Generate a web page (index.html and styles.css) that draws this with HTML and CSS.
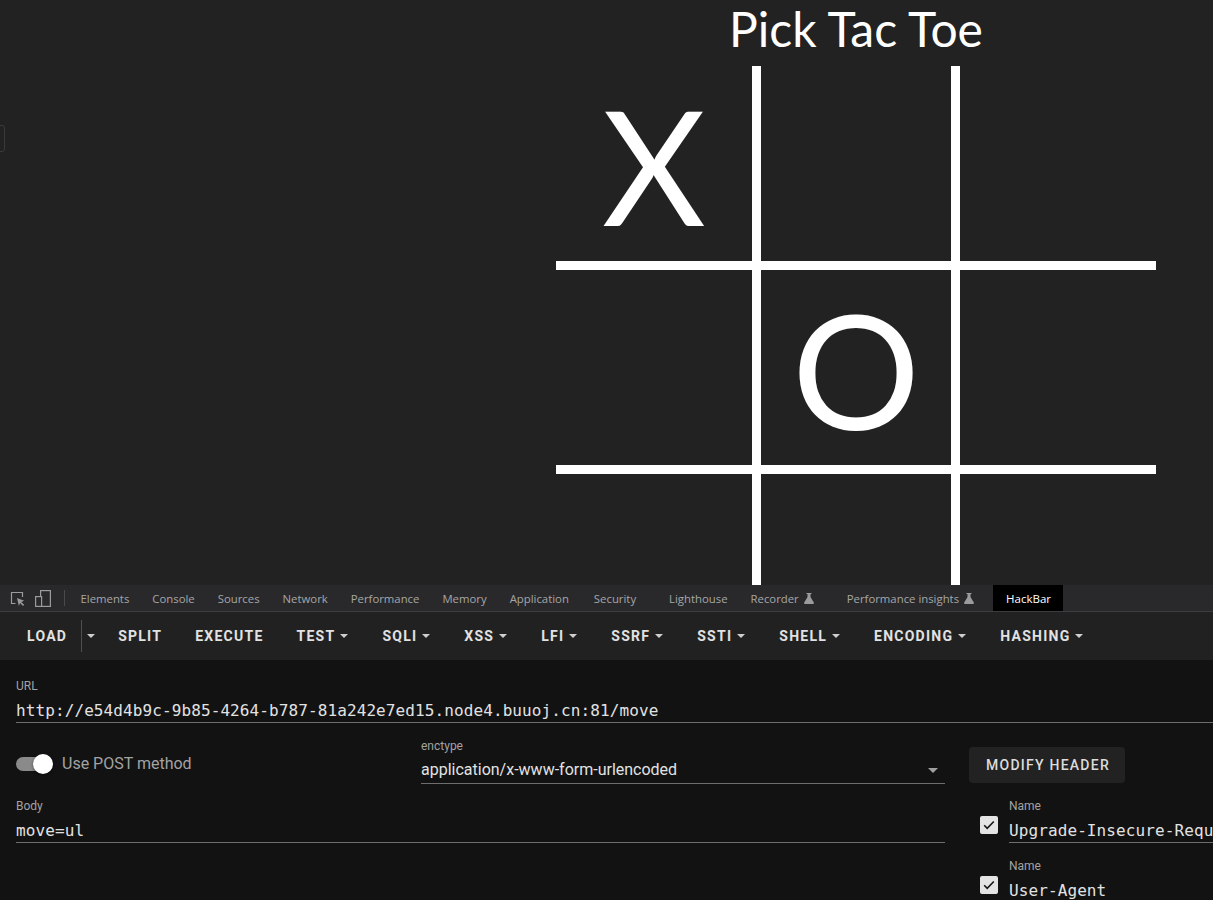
FILE: index.html
```html
<!DOCTYPE html>
<html lang="en">
<head>
<meta charset="utf-8">
<title>Pick Tac Toe</title>
<link rel="stylesheet" href="styles.css">
</head>
<body>
<div class="site">
  <div class="ghost-box"></div>
  <div class="game">
    <h1 class="title">Pick Tac Toe</h1>
    <div class="board">
      <div class="cell">X</div>
      <div class="cell"></div>
      <div class="cell"></div>
      <div class="cell"></div>
      <div class="cell">O</div>
      <div class="cell"></div>
      <div class="cell"></div>
      <div class="cell"></div>
      <div class="cell"></div>
    </div>
  </div>
</div>

<div class="devtools">
  <div class="devtabs">
    <span class="dt-icon">
      <svg width="15" height="15" viewBox="0 0 15 15"><path d="M5.5 12.5H1.5V1.5h11v4.5" fill="none" stroke="#9b9b9b" stroke-width="1.2"/><path d="M7 7l7.2 2.7-3 1.2 2.9 2.9-1.1 1.1-2.9-2.9-1.2 3z" fill="#9b9b9b"/></svg>
    </span>
    <span class="dt-icon dt-icon2">
      <svg width="16" height="17" viewBox="0 0 16 17"><rect x="5.6" y="0.6" width="9.8" height="15.8" fill="none" stroke="#9b9b9b" stroke-width="1.2"/><rect x="0.6" y="6.6" width="6" height="9.8" fill="#29292c" stroke="#9b9b9b" stroke-width="1.2"/></svg>
    </span>
    <span class="dt-sep"></span>
    <span class="tab">Elements</span>
    <span class="tab">Console</span>
    <span class="tab">Sources</span>
    <span class="tab">Network</span>
    <span class="tab">Performance</span>
    <span class="tab">Memory</span>
    <span class="tab tab-app">Application</span>
    <span class="tab tab-wide">Security</span>
    <span class="tab">Lighthouse</span>
    <span class="tab tab-wide">Recorder <svg class="flask" width="10" height="11" viewBox="0 0 10 11"><path d="M2.5 0h5v1h-1v3l3.3 5.6c.3.6-.1 1.4-.8 1.4H1c-.7 0-1.1-.8-.8-1.4L3.5 4V1h-1z" fill="#9b9b9b"/></svg></span>
    <span class="tab tab-wide tab-pi">Performance insights <svg class="flask" width="10" height="11" viewBox="0 0 10 11"><path d="M2.5 0h5v1h-1v3l3.3 5.6c.3.6-.1 1.4-.8 1.4H1c-.7 0-1.1-.8-.8-1.4L3.5 4V1h-1z" fill="#9b9b9b"/></svg></span>
    <span class="tab tab-active">HackBar</span>
  </div>

  <div class="toolbar">
    <div class="btn-group">
      <button class="tb-btn tb-load">LOAD</button>
      <button class="tb-caret-btn"><span class="caret"></span></button>
    </div>
    <button class="tb-btn">SPLIT</button>
    <button class="tb-btn">EXECUTE</button>
    <button class="tb-btn">TEST<span class="caret"></span></button>
    <button class="tb-btn">SQLI<span class="caret"></span></button>
    <button class="tb-btn">XSS<span class="caret"></span></button>
    <button class="tb-btn">LFI<span class="caret"></span></button>
    <button class="tb-btn">SSRF<span class="caret"></span></button>
    <button class="tb-btn">SSTI<span class="caret"></span></button>
    <button class="tb-btn">SHELL<span class="caret"></span></button>
    <button class="tb-btn">ENCODING<span class="caret"></span></button>
    <button class="tb-btn">HASHING<span class="caret"></span></button>
  </div>

  <div class="panel">
    <div class="form">
      <div class="field url-field">
        <label class="flabel">URL</label>
        <div class="input mono">http://e54d4b9c-9b85-4264-b787-81a242e7ed15.node4.buuoj.cn:81/move</div>
      </div>

      <div class="left-col">
        <div class="row2">
          <div class="switch-wrap">
            <span class="switch"><span class="track"></span><span class="thumb"></span></span>
            <span class="switch-label">Use POST method</span>
          </div>
          <div class="field">
            <label class="flabel">enctype</label>
            <div class="select">application/x-www-form-urlencoded<span class="sel-caret"></span></div>
          </div>
        </div>
        <div class="field body-field">
          <label class="flabel">Body</label>
          <div class="input mono">move=ul</div>
        </div>
      </div>

      <div class="right-col">
        <button class="modify">MODIFY HEADER</button>
        <div class="header-row">
          <span class="checkbox"><svg width="18" height="18" viewBox="0 0 18 18"><path d="M4.2 9.3l3 3 6.6-6.8" fill="none" stroke="#161616" stroke-width="1.6"/></svg></span>
          <div class="field hfield">
            <label class="flabel">Name</label>
            <div class="input mono">Upgrade-Insecure-Requests</div>
          </div>
        </div>
        <div class="header-row">
          <span class="checkbox"><svg width="18" height="18" viewBox="0 0 18 18"><path d="M4.2 9.3l3 3 6.6-6.8" fill="none" stroke="#161616" stroke-width="1.6"/></svg></span>
          <div class="field hfield">
            <label class="flabel">Name</label>
            <div class="input mono">User-Agent</div>
          </div>
        </div>
      </div>
    </div>
  </div>
</div>
</body>
</html>
```

FILE: styles.css
```css
* { box-sizing: border-box; }

html, body {
  margin: 0;
  padding: 0;
  width: 1213px;
  height: 900px;
  overflow: hidden;
  background: #121212;
}

/* ---------- page ---------- */
.site {
  position: relative;
  height: 585px;
  background: #222222;
  overflow: hidden;
}

.ghost-box {
  position: absolute;
  left: -20px;
  top: 125px;
  width: 25px;
  height: 27px;
  border: 1px solid #3a3a3a;
  border-radius: 3px;
}

.game {
  margin-left: 556px;
  width: 600px;
}

.title {
  margin: 0;
  font-family: Lato, sans-serif;
  font-weight: 400;
  font-size: 48px;
  line-height: 58px;
  color: #ffffff;
  text-align: center;
}

.board {
  margin-top: 8px;
  display: grid;
  grid-template-columns: 205px 199px 196px;
  grid-template-rows: 204px 204px 200px;
}

.cell {
  border-right: 9px solid #ffffff;
  border-bottom: 9px solid #ffffff;
  display: flex;
  align-items: center;
  justify-content: center;
  font-family: Lato, sans-serif;
  font-size: 160px;
  line-height: 192px;
  color: #ffffff;
}
.cell:nth-child(3n) { border-right: 0; }
.cell:nth-child(n+7) { border-bottom: 0; }

/* ---------- devtools tab bar ---------- */
.devtabs {
  height: 27px;
  background: #29292c;
  border-bottom: 1px solid #3d3d40;
  display: flex;
  align-items: center;
  padding-left: 10px;
  font-family: "Open Sans", sans-serif;
  font-size: 11.35px;
  color: #a6a6a6;
  white-space: nowrap;
}

.dt-icon { display: flex; align-items: center; height: 100%; }
.dt-icon2 { margin-left: 10px; }

.dt-sep {
  width: 1px;
  height: 16px;
  background: #4a4a4d;
  margin-left: 13px;
  margin-right: 4px;
}

.tab {
  height: 100%;
  display: flex;
  align-items: center;
  padding: 0 11.5px;
}
.tab-app { padding-right: 13.5px; }
.tab-wide { padding-right: 21.5px; }
.tab-pi { padding-right: 19px; }
.flask { margin-left: 5px; }

.tab-active {
  background: #000000;
  color: #ffffff;
  font-size: 11.5px;
  padding: 0 12px 0 13px;
}

/* ---------- hackbar toolbar ---------- */
.toolbar {
  height: 48px;
  background: #212121;
  display: flex;
  align-items: center;
  padding-left: 10px;
}

.btn-group { display: flex; align-items: center; }

.tb-btn {
  height: 36px;
  display: flex;
  align-items: center;
  gap: 5px;
  padding: 0 16px 0 17px;
  background: none;
  border: 0;
  font-family: Roboto, sans-serif;
  font-weight: 700;
  font-size: 14px;
  letter-spacing: 1.25px;
  color: #e2e2e2;
}
.tb-btn .caret { margin-left: 0; margin-right: 1px; }

.tb-load {
  padding-right: 14px;
  border-right: 1px solid #4f4f4f;
  height: 32px;
}

.tb-caret-btn {
  height: 36px;
  display: flex;
  align-items: center;
  padding: 0 6px 0 5px;
  background: none;
  border: 0;
}

.caret {
  display: inline-block;
  width: 0;
  height: 0;
  border-left: 4px solid transparent;
  border-right: 4px solid transparent;
  border-top: 4px solid #cfcfcf;
}

/* ---------- hackbar form ---------- */
.panel {
  height: 240px;
  background: #121212;
  overflow: hidden;
}

.form {
  width: 1500px;
  display: grid;
  grid-template-columns: 929px 1fr;
  column-gap: 24px;
  row-gap: 17px;
  padding: 20px 16px 0 16px;
}

.url-field { grid-column: 1 / -1; }

.flabel {
  display: block;
  font-family: Roboto, sans-serif;
  font-size: 12px;
  line-height: 12px;
  color: #a3a3a3;
  margin-bottom: 9px;
}

.input {
  font-size: 16px;
  line-height: 20px;
  color: #e2e2e2;
  border-bottom: 1px solid #6e6e6e;
  padding-bottom: 1px;
  white-space: nowrap;
  overflow: hidden;
}

.mono {
  font-family: "DejaVu Sans Mono", monospace;
  letter-spacing: 0.1px;
}

.row2 {
  display: grid;
  grid-template-columns: 389px 1fr;
  column-gap: 16px;
}

.switch-wrap {
  height: 44px;
  padding-top: 3px;
  display: flex;
  align-items: center;
}

.switch {
  position: relative;
  width: 37px;
  height: 20px;
  flex: none;
}
.track {
  position: absolute;
  left: 0;
  top: 3px;
  width: 34px;
  height: 14px;
  border-radius: 7px;
  background: #8a8a8a;
}
.thumb {
  position: absolute;
  left: 17px;
  top: 0;
  width: 20px;
  height: 20px;
  border-radius: 50%;
  background: #ffffff;
  box-shadow: 0 1px 3px rgba(0, 0, 0, 0.5);
}

.switch-label {
  margin-left: 9px;
  font-family: Roboto, sans-serif;
  font-size: 16px;
  color: #a3a3a3;
}

.select {
  display: flex;
  justify-content: space-between;
  align-items: center;
  font-family: Roboto, sans-serif;
  font-size: 16px;
  line-height: 20px;
  color: #e2e2e2;
  border-bottom: 1px solid #6e6e6e;
  padding-bottom: 3px;
  margin-top: -1px;
}

.sel-caret {
  width: 0;
  height: 0;
  border-left: 5px solid transparent;
  border-right: 5px solid transparent;
  border-top: 5px solid #a0a0a0;
  margin-right: 7px;
}

.body-field { margin-top: 16px; }

.right-col {
  display: flex;
  flex-direction: column;
  align-items: flex-start;
}

.modify {
  margin-top: 7px;
  height: 36px;
  padding: 0 15px 0 17px;
  border: 0;
  border-radius: 4px;
  background: #222222;
  font-family: Roboto, sans-serif;
  font-weight: 500;
  font-size: 14px;
  letter-spacing: 1.25px;
  color: #dcdcdc;
}

.header-row {
  display: flex;
  align-items: flex-start;
  padding-left: 11px;
  margin-top: 17px;
  width: 100%;
}
.header-row + .header-row { margin-top: 17px; }

.checkbox {
  flex: none;
  width: 18px;
  height: 18px;
  margin-top: 16px;
  margin-right: 11px;
  border-radius: 2px;
  background: #e4e4e4;
  display: flex;
}

.hfield { width: 300px; }
```
